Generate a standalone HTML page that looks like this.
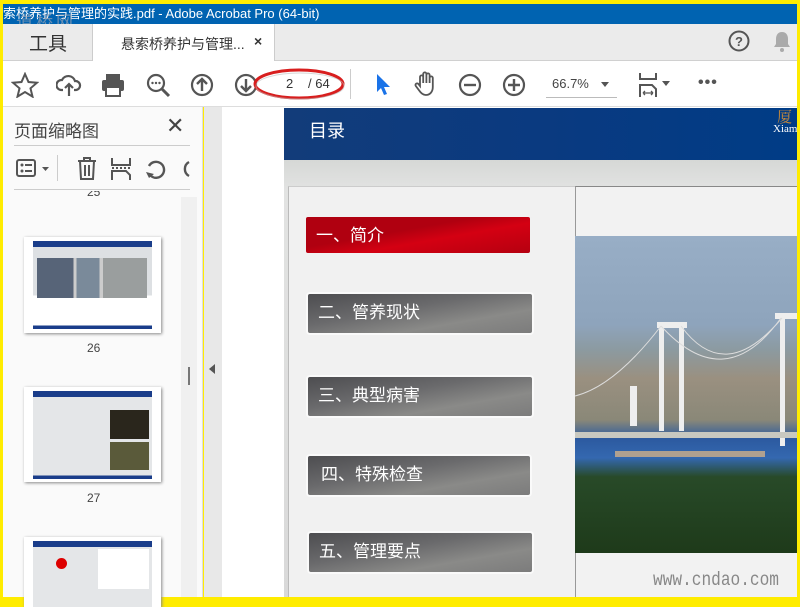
<!DOCTYPE html>
<html><head><meta charset="utf-8"><style>
*{margin:0;padding:0;box-sizing:border-box}
body{width:800px;height:600px;overflow:hidden;background:#ffec00;font-family:"Liberation Sans","Noto Sans CJK SC",sans-serif;position:relative}
.abs{position:absolute}
.title{left:3px;top:4px;width:794px;height:20px;background:#0063b1;color:#fff;font-size:13px;line-height:19px;white-space:nowrap;overflow:hidden}
.tabs{left:3px;top:24px;width:794px;height:37px;background:#ebebeb;border-bottom:1px solid #d0d0d0}
.tb{left:3px;top:61px;width:794px;height:46px;background:#fff;border-bottom:1px solid #ddd}
.panel{left:3px;top:107px;width:200px;height:490px;background:#fafafa;border-right:1px solid #ddd}
.split{left:204px;top:107px;width:18px;height:490px;background:#e8e8e8}
.doc{left:222px;top:107px;width:575px;height:490px;background:#fff;overflow:hidden}
.thumb{background:#fff;box-shadow:1px 1px 3px #888;overflow:hidden}
.btn{position:absolute;height:40px;border-radius:4px;color:#fff;font-size:17px;line-height:38px;padding-left:10px;border:2px solid #fafafa;background:linear-gradient(170deg,#4d4d50 0%,#6a6a6c 40%,#8a8a88 70%,#7c7c7c 100%)}
</style></head><body>
<div class="abs title">索桥养护与管理的实践.pdf - Adobe Acrobat Pro (64-bit)</div>
<div class="abs" style="left:16px;top:8px;color:#9aa4b4;font-size:17px;letter-spacing:3px;opacity:.7">道桥网</div>
<div class="abs tabs">
 <div class="abs" style="left:26px;top:5px;font-size:19px;color:#333">工具</div>
 <div class="abs" style="left:89px;top:0;width:183px;height:37px;background:#fff;border-left:1px solid #ccc;border-right:1px solid #ccc"></div>
 <div class="abs" style="left:118px;top:10px;font-size:14px;color:#333">悬索桥养护与管理...</div>
 <div class="abs" style="left:251px;top:9px;font-size:14px;color:#333;font-weight:bold">×</div>
 <svg class="abs" style="left:725px;top:6px" width="22" height="22"><circle cx="11" cy="11" r="9.5" fill="none" stroke="#555" stroke-width="2"/><text x="11" y="16" text-anchor="middle" font-size="13" font-weight="bold" fill="#555" font-family="Liberation Sans">?</text></svg>
 <svg class="abs" style="left:768px;top:5px" width="22" height="24"><path d="M11 3c-4 0-6 3-6 7v5l-2 3h16l-2-3v-5c0-4-2-7-6-7z" fill="#aaa"/><circle cx="11" cy="21" r="2" fill="#aaa"/></svg>
</div>
<div class="abs tb">
 <svg class="abs" style="left:8px;top:11px" width="28" height="26"><path d="M14 2l3.5 8 8.5.7-6.5 5.6 2 8.3L14 20l-7.5 4.6 2-8.3L2 10.7l8.5-.7z" fill="none" stroke="#555" stroke-width="2"/></svg>
 <svg class="abs" style="left:53px;top:11px" width="26" height="26"><path d="M7 18H5a5 5 0 0 1 1-10 7 7 0 0 1 13 1 4.5 4.5 0 0 1 1 9h-2M13 24V12M9 16l4-4 4 4" fill="none" stroke="#555" stroke-width="2.2"/></svg>
 <svg class="abs" style="left:97px;top:11px" width="26" height="26"><rect x="6" y="2" width="14" height="6" fill="#555"/><rect x="2" y="8" width="22" height="11" rx="2" fill="#555"/><rect x="6" y="15" width="14" height="9" fill="#fff" stroke="#555" stroke-width="2"/></svg>
 <svg class="abs" style="left:142px;top:11px" width="26" height="26"><circle cx="11" cy="11" r="8" fill="none" stroke="#555" stroke-width="2.2"/><path d="M17 17l7 7" stroke="#555" stroke-width="3"/><circle cx="7.5" cy="11" r="1.2" fill="#555"/><circle cx="11" cy="11" r="1.2" fill="#555"/><circle cx="14.5" cy="11" r="1.2" fill="#555"/></svg>
 <svg class="abs" style="left:186px;top:11px" width="26" height="26"><circle cx="13" cy="13" r="10" fill="none" stroke="#555" stroke-width="2.2"/><path d="M13 19V7M8 12l5-5 5 5" fill="none" stroke="#555" stroke-width="2.4"/></svg>
 <svg class="abs" style="left:230px;top:11px" width="26" height="26"><circle cx="13" cy="13" r="10" fill="none" stroke="#555" stroke-width="2.2"/><path d="M13 7v12M8 14l5 5 5-5" fill="none" stroke="#555" stroke-width="2.4"/></svg>
 <svg class="abs" style="left:250px;top:6px" width="94" height="34"><ellipse cx="46" cy="17" rx="44" ry="14" fill="none" stroke="#d81e1e" stroke-width="3"/><ellipse cx="47" cy="19" rx="44" ry="13" fill="none" stroke="#bbb" stroke-width="1" opacity=".6"/></svg>
 <div class="abs" style="left:283px;top:15px;font-size:13px;color:#333">2</div>
 <div class="abs" style="left:305px;top:15px;font-size:13px;color:#333">/ 64</div>
 <div class="abs" style="left:347px;top:8px;width:1px;height:30px;background:#ccc"></div>
 <svg class="abs" style="left:370px;top:11px" width="20" height="26"><path d="M4 2v18l4-4 3 7 3-1-3-7h6z" fill="#1a73e8"/></svg>
 <svg class="abs" style="left:410px;top:9px" width="26" height="28"><path d="M7 16V7a1.6 1.6 0 0 1 3.2 0v6V4a1.6 1.6 0 0 1 3.2 0v9V5a1.6 1.6 0 0 1 3.2 0v8V8a1.6 1.6 0 0 1 3.2 0v9c0 5-3 8-7 8-3 0-5-2-7-5l-3-4a1.6 1.6 0 0 1 2.6-2z" fill="none" stroke="#555" stroke-width="1.8"/></svg>
 <svg class="abs" style="left:454px;top:11px" width="26" height="26"><circle cx="13" cy="13" r="10" fill="none" stroke="#555" stroke-width="2.2"/><path d="M7 13h12" stroke="#555" stroke-width="2.4"/></svg>
 <svg class="abs" style="left:498px;top:11px" width="26" height="26"><circle cx="13" cy="13" r="10" fill="none" stroke="#555" stroke-width="2.2"/><path d="M7 13h12M13 7v12" stroke="#555" stroke-width="2.4"/></svg>
 <div class="abs" style="left:549px;top:15px;font-size:13px;color:#444">66.7%</div>
 <div class="abs" style="left:598px;top:21px;border:4px solid transparent;border-top:5px solid #555"></div>
 <div class="abs" style="left:543px;top:36px;width:71px;height:1px;background:#bbb"></div>
 <svg class="abs" style="left:635px;top:10px" width="36" height="28"><path d="M2 2v6h16V2M2 26v-12h12l4 4v8" fill="none" stroke="#555" stroke-width="2"/><path d="M5 22h10M5 22l2-2M5 22l2 2M15 22l-2-2M15 22l-2 2" stroke="#555" stroke-width="1.3"/><path d="M24 10h8l-4 5z" fill="#555"/></svg>
 <div class="abs" style="left:695px;top:13px;font-size:16px;color:#555;letter-spacing:1px;font-weight:bold">•••</div>
</div>
<div class="abs panel">
 <div class="abs" style="left:11px;top:10px;font-size:17px;color:#444">页面缩略图</div>
 <div class="abs" style="left:163px;top:6px;font-size:22px;color:#444">✕</div>
 <div class="abs" style="left:11px;top:38px;width:176px;height:1px;background:#ccc"></div>
 <svg class="abs" style="left:12px;top:50px" width="40" height="24"><rect x="2" y="3" width="18" height="16" rx="2" fill="none" stroke="#555" stroke-width="2"/><circle cx="7" cy="8" r="1.5" fill="#555"/><circle cx="7" cy="14" r="1.5" fill="#555"/><path d="M10 8h7M10 14h7" stroke="#555" stroke-width="2"/><path d="M27 10h7l-3.5 4z" fill="#555"/></svg>
 <div class="abs" style="left:54px;top:48px;width:1px;height:26px;background:#ccc"></div>
 <svg class="abs" style="left:72px;top:49px" width="24" height="26"><path d="M3 5h18M9 5V2h6v3M5 5l1 18h12l1-18M10 9v11M14 9v11" fill="none" stroke="#555" stroke-width="2"/></svg>
 <svg class="abs" style="left:106px;top:49px" width="24" height="26"><path d="M3 2v7h18V2M3 24v-9h14l4 4v5" fill="none" stroke="#555" stroke-width="2"/><path d="M3 12h18" stroke="#555" stroke-width="2" stroke-dasharray="2 2"/></svg>
 <svg class="abs" style="left:140px;top:49px" width="24" height="26"><path d="M8 20a8 8 0 1 0-2-10" fill="none" stroke="#555" stroke-width="2.4"/><path d="M3 16l3 6 5-4z" fill="#555"/></svg>
 <svg class="abs" style="left:172px;top:49px" width="16" height="26"><path d="M14 6a8 8 0 0 0 0 14" fill="none" stroke="#555" stroke-width="2.4"/></svg>
 <div class="abs" style="left:11px;top:82px;width:176px;height:1px;background:#ccc"></div>
 <div class="abs" style="left:178px;top:90px;width:16px;height:400px;background:#f0f0f0"></div>
 <div class="abs" style="left:185px;top:260px;width:2px;height:18px;background:#777"></div>
 <div class="abs" style="left:84px;top:84px;font-size:12px;color:#444;height:7px;overflow:hidden;line-height:3px">25</div>
 <div class="abs thumb" style="left:21px;top:130px;width:137px;height:96px"><div class="abs" style="left:9px;top:4px;width:119px;height:88px;background:linear-gradient(#1a3d8a 0 7%,#dde0e3 7% 62%,#fff 62% 96%,#1a3d8a 96%)"></div><div class="abs" style="left:13px;top:21px;width:110px;height:40px;background:linear-gradient(90deg,#576478 0 33%,#ccc 33% 36%,#7a8a9a 36% 57%,#ccc 57% 60%,#9a9e9e 60%)"></div></div>
 <div class="abs" style="left:84px;top:234px;font-size:12px;color:#444">26</div>
 <div class="abs thumb" style="left:21px;top:280px;width:137px;height:95px"><div class="abs" style="left:9px;top:4px;width:119px;height:88px;background:linear-gradient(#1a3d8a 0 7%,#e4e6e8 7% 96%,#1a3d8a 96%)"></div><div class="abs" style="left:86px;top:23px;width:39px;height:29px;background:#2a261c"></div><div class="abs" style="left:86px;top:55px;width:39px;height:28px;background:#5a5a3a"></div></div>
 <div class="abs" style="left:84px;top:384px;font-size:12px;color:#444">27</div>
 <div class="abs thumb" style="left:21px;top:430px;width:137px;height:70px"><div class="abs" style="left:9px;top:4px;width:119px;height:66px;background:linear-gradient(#1a3d8a 0 9%,#e4e6e8 9%)"></div><div class="abs" style="left:32px;top:21px;width:11px;height:11px;border-radius:50%;background:#d00"></div><div class="abs" style="left:74px;top:12px;width:51px;height:40px;background:#fff"></div></div>
</div>
<div class="abs split"><div class="abs" style="left:5px;top:257px;border:5px solid transparent;border-right:6px solid #555;border-left:0"></div></div>
<div class="abs doc">
 <div class="abs" style="left:62px;top:1px;width:513px;height:52px;background:linear-gradient(90deg,#123c7a,#0a3a80 50%,#003c86)"></div>
 <div class="abs" style="left:87px;top:10px;font-size:18px;color:#fff">目录</div>
 <div class="abs" style="left:555px;top:-1px;font-size:15px;color:#c88a3a;font-family:'Liberation Serif','Noto Serif CJK SC',serif">厦</div>
 <div class="abs" style="left:551px;top:16px;font-size:11px;color:#fff;font-family:'Liberation Serif',serif">Xiam</div>
 <div class="abs" style="left:62px;top:53px;width:513px;height:437px;background:linear-gradient(#d6d8d6,#e2e3e2 30px,#d9d9d9)"></div>
 <div class="abs" style="left:66px;top:79px;width:287px;height:411px;background:#f1f1f1;border-left:1px solid #bbb;border-top:1px solid #ccc"></div>
 <div class="abs" style="left:353px;top:79px;width:222px;height:411px;background:#f2f2f2;border-left:1px solid #999;border-top:1px solid #888"></div>
 <div class="abs" style="left:353px;top:129px;width:222px;height:317px;background:linear-gradient(#98aec6 0%,#8ea4bc 28%,#8c9aa0 36%,#9a9080 45%,#8a8878 58%,#2c5aa0 64%,#3468b0 70%,#284a28 76%,#1e3a1a 100%)"></div>
 <svg class="abs" style="left:353px;top:129px" width="222" height="317"><g fill="#eee"><rect x="84" y="90" width="5" height="105"/><rect x="104" y="90" width="5" height="105"/><rect x="82" y="86" width="30" height="6"/><rect x="205" y="80" width="5" height="130"/><rect x="200" y="77" width="22" height="6"/><rect x="55" y="150" width="7" height="40"/></g><path d="M86 90Q150 160 206 82M106 90Q150 150 207 82M86 90Q40 150 0 160" stroke="#ddd" fill="none"/><rect x="0" y="196" width="222" height="6" fill="#c8c8c0"/><rect x="40" y="215" width="150" height="6" fill="#b0a090"/></svg>
 <div class="abs" style="left:431px;top:462px;font-size:19px;color:#888;font-family:'Liberation Mono',monospace;transform:scaleX(.85);transform-origin:left">www.cndao.com</div>
 <div class="btn" style="left:82px;top:108px;width:228px;background:linear-gradient(170deg,#b00010 0%,#b00010 40%,#d40012 60%,#b50010 100%);border-color:#f1f1f1">一、简介</div>
 <div class="btn" style="left:84px;top:185px;width:228px;height:43px">二、管养现状</div>
 <div class="btn" style="left:84px;top:268px;width:228px;height:43px">三、典型病害</div>
 <div class="btn" style="left:84px;top:347px;width:226px;height:43px;padding-left:13px">四、特殊检查</div>
 <div class="btn" style="left:85px;top:424px;width:227px;height:43px">五、管理要点</div>
</div>
</body></html>
